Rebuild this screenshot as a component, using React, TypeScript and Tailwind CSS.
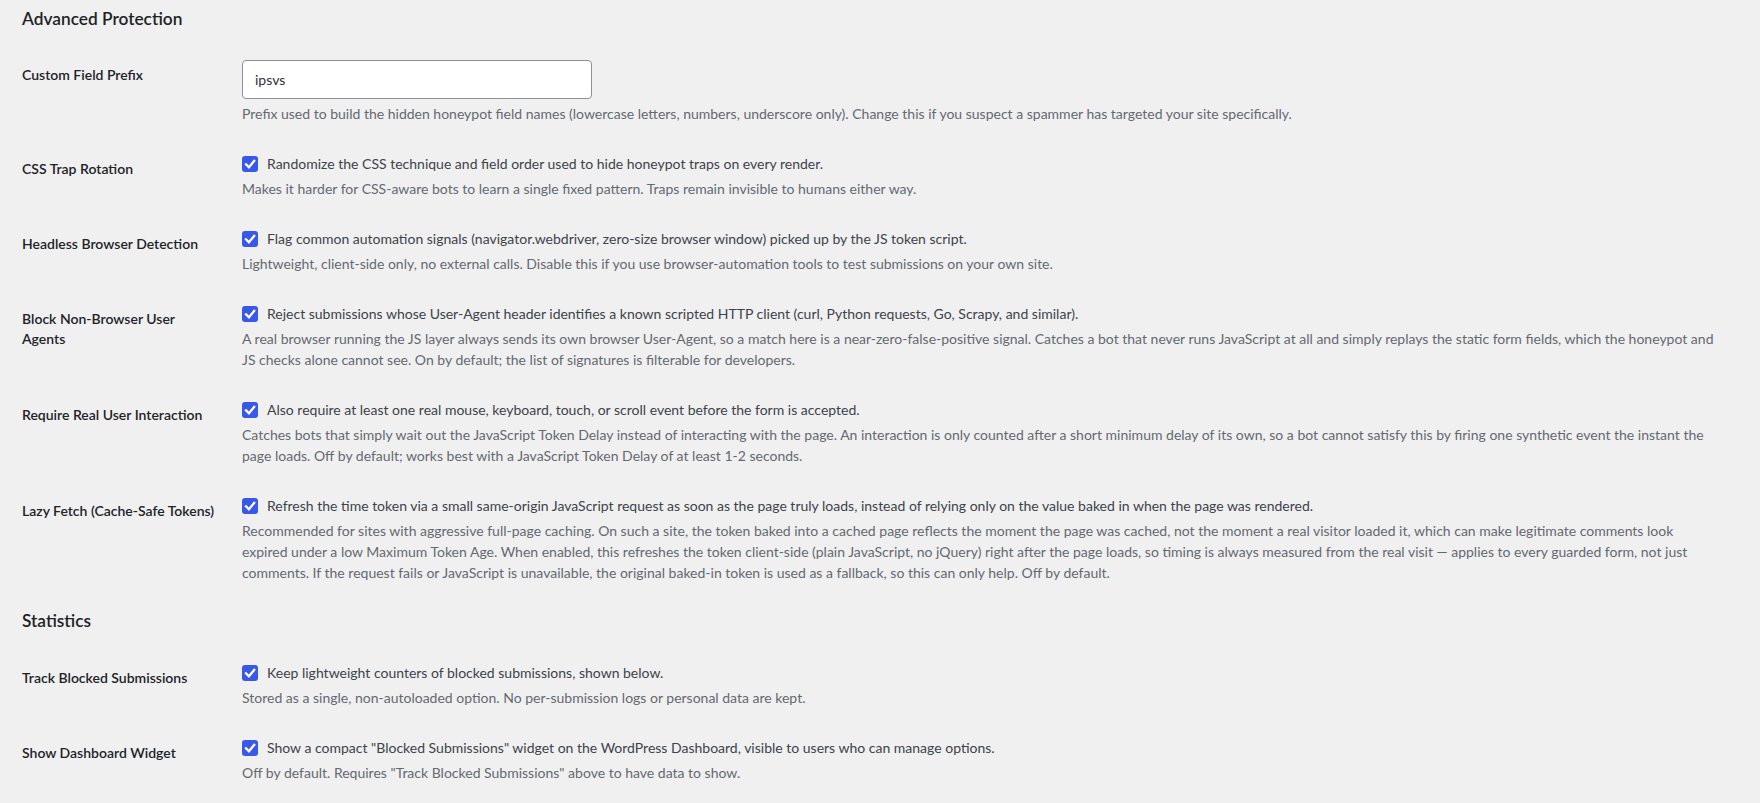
import React from "react";

type Row = {
  label: React.ReactNode;
  check?: string;
  input?: string;
  desc: string[];
};

const advanced: Row[] = [
  {
    label: "Custom Field Prefix",
    input: "ipsvs",
    desc: [
      "Prefix used to build the hidden honeypot field names (lowercase letters, numbers, underscore only). Change this if you suspect a spammer has targeted your site specifically.",
    ],
  },
  {
    label: "CSS Trap Rotation",
    check: "Randomize the CSS technique and field order used to hide honeypot traps on every render.",
    desc: ["Makes it harder for CSS-aware bots to learn a single fixed pattern. Traps remain invisible to humans either way."],
  },
  {
    label: "Headless Browser Detection",
    check: "Flag common automation signals (navigator.webdriver, zero-size browser window) picked up by the JS token script.",
    desc: [
      "Lightweight, client-side only, no external calls. Disable this if you use browser-automation tools to test submissions on your own site.",
    ],
  },
  {
    label: (
      <>
        Block Non-Browser User
        <br />
        Agents
      </>
    ),
    check:
      "Reject submissions whose User-Agent header identifies a known scripted HTTP client (curl, Python requests, Go, Scrapy, and similar).",
    desc: [
      "A real browser running the JS layer always sends its own browser User-Agent, so a match here is a near-zero-false-positive signal. Catches a bot that never runs JavaScript at all and simply replays the static form fields, which the honeypot and",
      "JS checks alone cannot see. On by default; the list of signatures is filterable for developers.",
    ],
  },
  {
    label: "Require Real User Interaction",
    check: "Also require at least one real mouse, keyboard, touch, or scroll event before the form is accepted.",
    desc: [
      "Catches bots that simply wait out the JavaScript Token Delay instead of interacting with the page. An interaction is only counted after a short minimum delay of its own, so a bot cannot satisfy this by firing one synthetic event the instant the",
      "page loads. Off by default; works best with a JavaScript Token Delay of at least 1-2 seconds.",
    ],
  },
  {
    label: "Lazy Fetch (Cache-Safe Tokens)",
    check:
      "Refresh the time token via a small same-origin JavaScript request as soon as the page truly loads, instead of relying only on the value baked in when the page was rendered.",
    desc: [
      "Recommended for sites with aggressive full-page caching. On such a site, the token baked into a cached page reflects the moment the page was cached, not the moment a real visitor loaded it, which can make legitimate comments look",
      "expired under a low Maximum Token Age. When enabled, this refreshes the token client-side (plain JavaScript, no jQuery) right after the page loads, so timing is always measured from the real visit \u2014 applies to every guarded form, not just",
      "comments. If the request fails or JavaScript is unavailable, the original baked-in token is used as a fallback, so this can only help. Off by default.",
    ],
  },
];

const stats: Row[] = [
  {
    label: "Track Blocked Submissions",
    check: "Keep lightweight counters of blocked submissions, shown below.",
    desc: ["Stored as a single, non-autoloaded option. No per-submission logs or personal data are kept."],
  },
  {
    label: "Show Dashboard Widget",
    check:
      'Show a compact "Blocked Submissions" widget on the WordPress Dashboard, visible to users who can manage options.',
    desc: ['Off by default. Requires "Track Blocked Submissions" above to have data to show.'],
  },
];

function CheckBox() {
  return (
    <span className="mr-[9px] flex h-[16px] w-[16px] shrink-0 items-center justify-center rounded-[3px] bg-[#3858e9]">
      <svg viewBox="0 0 16 16" className="h-[16px] w-[16px]" fill="none">
        <path d="M4 8.3 L6.9 11.2 L12.2 4.9" stroke="#ffffff" strokeWidth="2.3" strokeLinecap="square" />
      </svg>
    </span>
  );
}

function SettingRow({ row }: { row: Row }) {
  return (
    <div className="flex">
      <div className="w-[210px] shrink-0 pt-[20px] pr-[10px] text-[14px] leading-[20px] font-semibold text-[#1d2327]">
        {row.label}
      </div>
      <div className="py-[15px] pl-[10px]">
        {row.input !== undefined ? (
          <div className="flex h-[39px] w-[350px] items-center rounded-[4px] border border-[#8c8f94] bg-white pl-[12px] text-[14px] text-[#2c3338]">
            {row.input}
          </div>
        ) : (
          <div className="flex h-[20px] items-center text-[14px] leading-[20px] whitespace-nowrap text-[#3c434a]">
            <CheckBox />
            <span>{row.check}</span>
          </div>
        )}
        <div className="mt-[4px] text-[14px] leading-[21px] text-[#646970]">
          {row.desc.map((line, i) => (
            <div key={i} className="whitespace-nowrap">
              {line}
            </div>
          ))}
        </div>
      </div>
    </div>
  );
}

function Heading({ children, className }: { children: React.ReactNode; className: string }) {
  return (
    <h2 className={`h-[24px] text-[17.3px] leading-[24px] font-semibold text-[#1d2327] ${className}`}>{children}</h2>
  );
}

export default function App() {
  return (
    <div className="min-h-screen overflow-hidden bg-[#f0f0f1] pl-[22px] font-['Lato',sans-serif]">
      <Heading className="mt-[7px] mb-[14px]">Advanced Protection</Heading>
      {advanced.map((r, i) => (
        <SettingRow key={i} row={r} />
      ))}
      <Heading className="mt-[11px] mb-[15px]">Statistics</Heading>
      {stats.map((r, i) => (
        <SettingRow key={i} row={r} />
      ))}
    </div>
  );
}
